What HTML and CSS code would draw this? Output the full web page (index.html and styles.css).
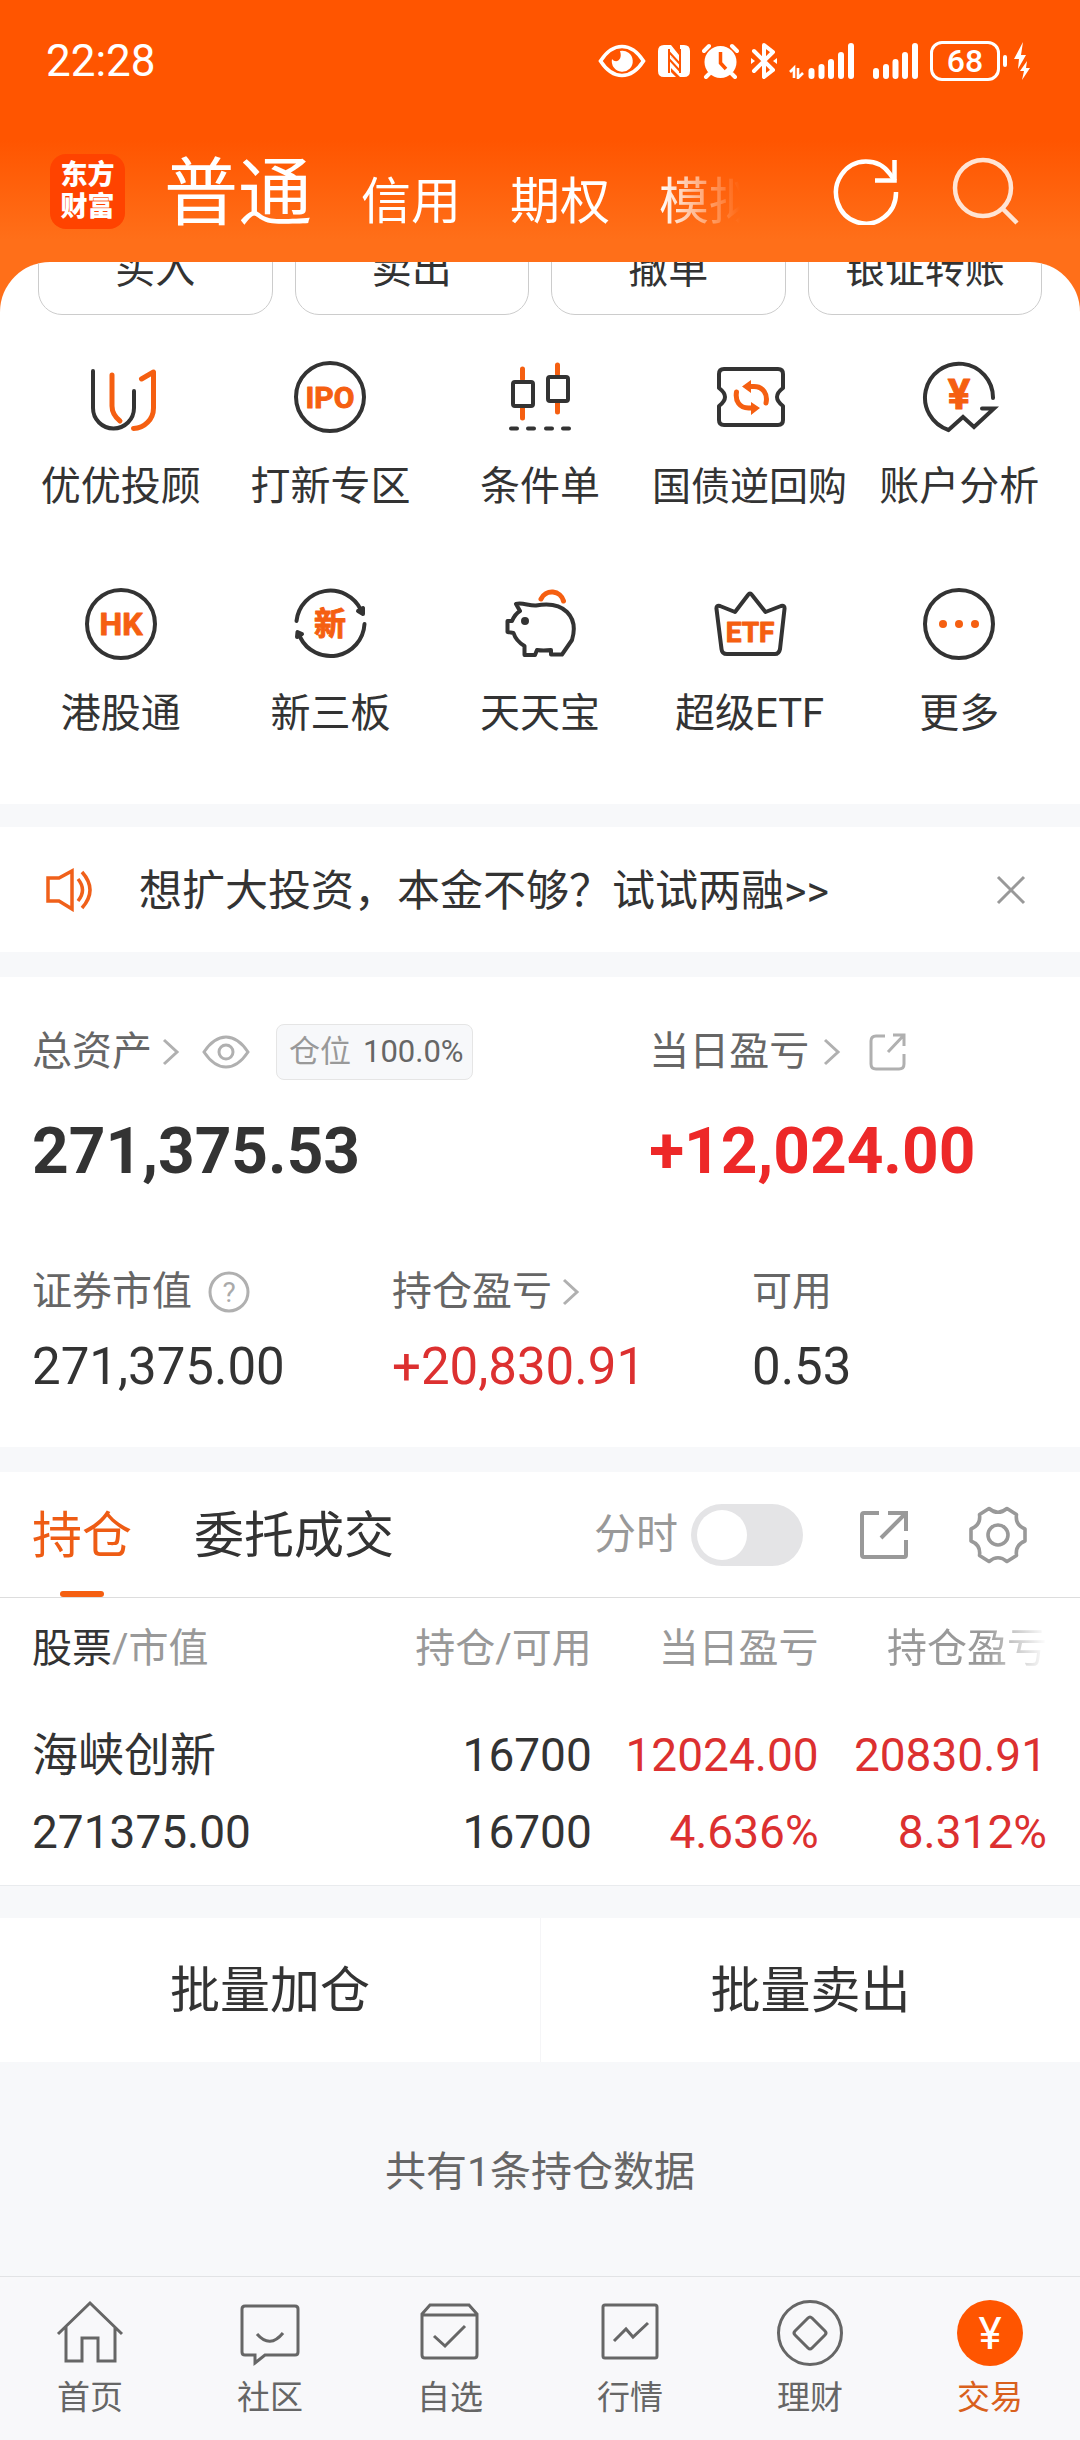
FILE: index.html
```html
<!DOCTYPE html>
<html lang="zh-CN">
<head>
<meta charset="utf-8">
<meta name="viewport" content="width=device-width, initial-scale=1">
<title>交易</title>
<link rel="stylesheet" href="styles.css">
</head>
<body>
<header class="top">
  <div class="status">
    <span class="status-time">22:28</span>
    <div class="status-icons">
      <svg width="48" height="36" viewBox="0 0 48 36" aria-hidden="true"><path d="M2.500 18C9 8 16 3.500 24 3.500S39 8 45.500 18C39 28 32 32.500 24 32.500S9 28 2.500 18Z" fill="none" stroke="#fff" stroke-width="3.600"/><path d="M22 8a10.500 10.500 0 1 1-8 8c4 5 11 1 8-8Z" fill="#fff"/></svg>
      <svg width="32" height="36" viewBox="0 0 32 36" aria-hidden="true"><path d="M6 2H13L25 17V28L13 14V29L18 34H6Q0 34 0 28V8Q0 2 6 2Z" fill="#fff"/><path d="M22 2H26Q32 2 32 8V28Q32 34 26 34H22L9 21V10L22 23Z" fill="#fff"/><path d="M11 6V30M22 6V30M11 9L22 21M11 16L22 28" stroke="#f50" stroke-width="2" fill="none"/></svg>
      <svg width="37" height="36" viewBox="0 0 37 36" aria-hidden="true"><circle cx="18.500" cy="19" r="16" fill="#fff"/><path d="M2 8L7 3M35 8L30 3M7 31L4 34M30 31L33 34" stroke="#fff" stroke-width="4" stroke-linecap="round"/><path d="M18.500 9V20L24 26" fill="none" stroke="#f50" stroke-width="3.500"/></svg>
      <svg width="26" height="38" viewBox="0 0 26 38" aria-hidden="true"><path d="M3 9L22 28L13 35V3L22 10L3 29" fill="none" stroke="#fff" stroke-width="4" stroke-linejoin="round" stroke-linecap="round"/><path d="M0 16l4 3-4 3zM26 16l-4 3 4 3z" fill="#fff"/></svg>
      <svg class="signal-main" width="65" height="36" viewBox="0 0 65 36" aria-hidden="true"><path d="M22.500 28V33M32.500 24V33M42 19V33M52 12V33M62 3V33" stroke="#fff" stroke-width="6" stroke-linecap="round"/><path d="M1 29L5 25V35M9 25V35L14 30" fill="none" stroke="#fff" stroke-width="2.600"/></svg>
      <svg width="45" height="36" viewBox="0 0 45 36" aria-hidden="true"><path d="M3 28V33M13 24V33M22.500 19V33M32 12V33M42 3V33" stroke="#fff" stroke-width="6" stroke-linecap="round"/></svg>
      <span class="battery"><span class="battery-cell">68</span><span class="battery-nub"></span><svg class="bolt" width="17" height="38" viewBox="0 0 17 38" aria-hidden="true"><path d="M10 0L1 17H6L5 27L13 13H8ZM14 19L7 29H11L9 38L17 26H13Z" fill="#fff"/></svg></span>
    </div>
  </div>
  <div class="bar">
    <div class="logo">东方<br>财富</div>
    <nav class="accounts">
      <a class="account account-on" href="#">普通</a>
      <a class="account" href="#">信用</a>
      <a class="account" href="#">期权</a>
      <a class="account" href="#">模拟</a>
    </nav>
    <div class="bar-tools">
      <button class="tool" type="button" aria-label="刷新"><svg width="68" height="68" viewBox="0 0 68 68"><path d="M64 35A30 31 0 1 1 58 17L63 24" fill="none" stroke="#fff" stroke-width="4.500"/><path d="M62.500 3V23.500H43" fill="none" stroke="#fff" stroke-width="4.500"/></svg></button>
      <button class="tool" type="button" aria-label="搜索"><svg width="68" height="68" viewBox="0 0 68 68"><circle cx="31" cy="31" r="28" fill="none" stroke="#ffe4d4" stroke-width="4.500"/><path d="M50 51L65 66" stroke="#ffe4d4" stroke-width="4.500"/></svg></button>
    </div>
  </div>
</header>

<main class="page">
  <section class="panel">
    <div class="orders">
      <button class="order" type="button">买入</button>
      <button class="order" type="button">卖出</button>
      <button class="order" type="button">撤单</button>
      <button class="order" type="button">银证转账</button>
    </div>
    <div class="quick">
      <a class="quick-item" href="#"><svg class="ico" viewBox="0 0 80 80"><path d="M12 14V51a20.500 20.500 0 0 0 41 0V34"/><path class="hot" d="M31 18V49c0 6 3 11 8 15M60.500 22L72.500 15V51a20.500 20.500 0 0 1-20 20.500"/></svg><span>优优投顾</span></a>
      <a class="quick-item" href="#"><svg class="ico" viewBox="0 0 80 80"><circle cx="40" cy="40" r="34"/><text class="mark" x="40" y="51" font-size="30">IPO</text></svg><span>打新专区</span></a>
      <a class="quick-item" href="#"><svg class="ico" viewBox="0 0 80 80"><path class="hot" d="M22.500 12V22M22.500 51V61M57.500 8V17M57.500 46V55"/><rect x="13" y="25" width="20" height="24" rx="2"/><rect x="48" y="20" width="20" height="24" rx="2"/><path d="M11 71.500h6M28 71.500h6M46 71.500h6M63 71.500h6"/></svg><span>条件单</span></a>
      <a class="quick-item quick-long" href="#"><svg class="ico" viewBox="0 0 80 80"><path d="M14 12H68Q73 12 73 17V31C69 34 67 36 67 40S69 46 73 49V63Q73 68 68 68H14Q9 68 9 63V49C13 46 15 44 15 40S13 34 9 31V17Q9 12 14 12Z"/><path class="hot" d="M26.500 35c-1.500 9 3 16 12 16h3M56 46c2-9-3-16.500-12-16.500h-3" stroke-width="5"/><path class="fill" d="M41 45L50 51L41 58ZM41 23L32 29.500L41 36Z"/></svg><span>国债逆回购</span></a>
      <a class="quick-item" href="#"><svg class="ico" viewBox="0 0 80 80"><path d="M74 41A34 34 0 1 0 29.500 73L44 60L55 70L75 51.500H63" stroke-linejoin="miter"/><text class="mark" x="40" y="52" font-size="42">¥</text></svg><span>账户分析</span></a>
      <a class="quick-item" href="#"><svg class="ico" viewBox="0 0 80 80"><circle cx="40" cy="40" r="34"/><text class="mark" x="40" y="51" font-size="32">HK</text></svg><span>港股通</span></a>
      <a class="quick-item" href="#"><svg class="ico" viewBox="0 0 80 80"><path d="M6.500 37A34 34 0 0 1 71 26M74.500 40A34 34 0 0 1 10 53"/><path class="ink" d="M68 27L73 24L73 30ZM12 50L7.500 48L7 53Z"/><text class="mark" x="40" y="51" font-size="32">新</text></svg><span>新三板</span></a>
      <a class="quick-item" href="#"><svg class="ico" viewBox="0 0 80 80"><path class="hot" d="M41 15a12 12 0 0 1 22.500 2"/><path d="M16 20C22 18 29 22 36 21.500C50 19 60 21 67 28C75 36 75 46 72 56L62 70.500H51V66Q43 67 37 66L35 71H24.500V62Q16 57 13.500 49L7.500 48V37H12Q15 30 20 27Z"/><circle class="ink" cx="25" cy="37" r="2"/></svg><span>天天宝</span></a>
      <a class="quick-item" href="#"><svg class="ico" viewBox="0 0 80 80"><path d="M38 11Q40 8 42 11L55.500 28L71 22Q75 21 74.500 25L70 65Q69 70 65 70H17Q12 70 11.500 65L6.500 25Q6 21 10 22L25 28Z"/><text class="mark" x="40" y="58" font-size="28">ETF</text></svg><span>超级ETF</span></a>
      <a class="quick-item" href="#"><svg class="ico" viewBox="0 0 80 80"><circle cx="40" cy="40" r="34"/><g class="fill"><circle cx="24" cy="40" r="4"/><circle cx="40" cy="40" r="4"/><circle cx="56" cy="40" r="4"/></g></svg><span>更多</span></a>
    </div>
  </section>

  <section class="notice">
    <svg width="50" height="44" viewBox="0 0 50 44" fill="none" stroke="#f0601a" stroke-width="3.500" aria-hidden="true"><path d="M3 10H14L27 3V41L14 33H3Z"/><path d="M33 11Q42 22 33 33M37 4Q53 22 37 40"/></svg>
    <a class="notice-text" href="#">想扩大投资，本金不够？试试两融&gt;&gt;</a>
    <button class="tool" type="button" aria-label="关闭"><svg width="30" height="30" viewBox="0 0 30 30"><path d="M2 2L28 28M28 2L2 28" stroke="#999" stroke-width="3"/></svg></button>
  </section>

  <section class="assets">
    <div class="asset-row asset-row-main">
      <div class="asset">
        <div class="asset-label"><span>总资产</span><svg class="chev" width="18" height="30" viewBox="0 0 18 30"><path d="M2 3L15 15L2 27"/></svg><svg class="eye" width="48" height="34" viewBox="0 0 48 34"><path d="M2 17Q12 2 24 2T46 17Q36 32 24 32T2 17Z"/><circle cx="24" cy="17" r="7"/></svg><span class="badge"><span class="badge-name">仓位</span><span>100.0%</span></span></div>
        <strong class="asset-total">271,375.53</strong>
      </div>
      <div class="asset">
        <div class="asset-label"><span>当日盈亏</span><svg class="chev chev-wide" width="18" height="30" viewBox="0 0 18 30"><path d="M2 3L15 15L2 27"/></svg><svg class="share" width="38" height="38" viewBox="0 0 38 38"><path d="M16 3H7Q2 3 2 8V31Q2 36 7 36H30Q35 36 35 31V21M24 2H35V13M35 2L19 19"/></svg></div>
        <strong class="asset-total rise-strong">+12,024.00</strong>
      </div>
    </div>
    <div class="asset-row asset-row-sub">
      <div class="asset">
        <div class="asset-label"><span>证券市值</span><svg class="help" width="42" height="42" viewBox="0 0 42 42"><circle cx="21" cy="21" r="19"/><text x="21" y="31">?</text></svg></div>
        <span class="asset-value">271,375.00</span>
      </div>
      <div class="asset">
        <div class="asset-label"><span>持仓盈亏</span><svg class="chev" width="18" height="30" viewBox="0 0 18 30"><path d="M2 3L15 15L2 27"/></svg></div>
        <span class="asset-value rise">+20,830.91</span>
      </div>
      <div class="asset">
        <div class="asset-label"><span>可用</span></div>
        <span class="asset-value">0.53</span>
      </div>
    </div>
  </section>

  <section class="holdings">
    <div class="tabs">
      <button class="tab tab-on" type="button">持仓</button>
      <button class="tab" type="button">委托成交</button>
      <label class="minute"><span>分时</span><input class="switch" type="checkbox"></label>
      <button class="tool" type="button" aria-label="导出"><svg width="50" height="50" viewBox="0 0 50 50" fill="none" stroke="#999" stroke-width="4"><path d="M20 3H5Q3 3 3 5V45Q3 47 5 47H45Q47 47 47 45V30M29 3H47V21M46 4L22 28"/></svg></button>
      <button class="tool tool-gear" type="button" aria-label="设置"><svg width="58" height="58" viewBox="0 0 58 58" fill="none" stroke="#999" stroke-width="3.600" stroke-linejoin="round"><path d="M56 23Q46 19 47.500 8.500L38 2.500Q29 10 20 2.500L10.500 8.500Q12 19 2 23V35Q12 39 10.500 49.500L20 55.500Q29 48 38 55.500L47.500 49.500Q46 39 56 35Z"/><circle cx="29" cy="29" r="10"/></svg></button>
    </div>
    <table class="table">
      <thead><tr><th><b>股票</b>/市值</th><th>持仓/可用</th><th>当日盈亏</th><th><span class="fade">持仓盈亏</span></th></tr></thead>
      <tbody><tr><td>海峡创新<br>271375.00</td><td>16700<br>16700</td><td class="rise">12024.00<br>4.636%</td><td class="rise">20830.91<br>8.312%</td></tr></tbody>
    </table>
  </section>

  <div class="batch">
    <button class="batch-btn" type="button">批量加仓</button>
    <button class="batch-btn" type="button">批量卖出</button>
  </div>
  <p class="count">共有1条持仓数据</p>
</main>

<nav class="nav">
  <a class="nav-item" href="#"><svg class="nav-ico" viewBox="0 0 72 72"><path d="M4 37L36 6L68 37M12 30V64H28V41H44V64H61V30"/></svg><span>首页</span></a>
  <a class="nav-item" href="#"><svg class="nav-ico" viewBox="0 0 72 72"><path d="M11 9H61Q64 9 64 12V55Q64 58 61 58H31L21 66V58H11Q8 58 8 55V12Q8 9 11 9ZM23 37Q36 52 49 36"/></svg><span>社区</span></a>
  <a class="nav-item" href="#"><svg class="nav-ico" viewBox="0 0 72 72"><path d="M8 17L16 8H55L63 17V58Q63 61 60 61H11Q8 61 8 58ZM8 18H63M20 39L31 49L51 29"/></svg><span>自选</span></a>
  <a class="nav-item" href="#"><svg class="nav-ico" viewBox="0 0 72 72"><rect x="9" y="8" width="54" height="53" rx="2"/><path d="M20 44L32 32L39 40L54 26"/></svg><span>行情</span></a>
  <a class="nav-item" href="#"><svg class="nav-ico" viewBox="0 0 72 72"><circle cx="36" cy="36" r="31.500"/><path d="M34 21Q36 19 38 21L51 34Q53 36 51 38L38 51Q36 53 34 51L21 38Q19 36 21 34Z"/></svg><span>理财</span></a>
  <a class="nav-item nav-on" href="#"><svg class="nav-ico" viewBox="0 0 72 72"><circle cx="36" cy="36" r="33"/><text x="36" y="52">¥</text></svg><span>交易</span></a>
</nav>
</body>
</html>
```
FILE: styles.css
```css
* { box-sizing: border-box; }

body {
  margin: 0;
  min-height: 100vh;
  display: flex;
  flex-direction: column;
  background: #f7f8fa;
  color: #333;
  font-family: "Roboto", "Noto Sans CJK SC", sans-serif;
  font-size: 40px;
  line-height: 60px;
}

a { color: inherit; text-decoration: none; }
svg { display: block; flex: none; }
button {
  padding: 0;
  border: 0;
  background: none;
  color: inherit;
  font: inherit;
  cursor: pointer;
}

/* header */
.top {
  background: linear-gradient(#f50 0, #f50 140px, #ff6f19 240px, #ff6f19 100%);
  color: #fff;
  padding-bottom: 84px;
}
.status {
  display: flex;
  justify-content: space-between;
  align-items: center;
  height: 122px;
  padding: 0 50px 0 46px;
}
.status-time { font-size: 44px; }
.status-icons { display: flex; align-items: center; gap: 12px; }
.signal-main { margin-right: 7px; }
.battery { display: flex; align-items: center; gap: 3px; }
.battery-cell {
  width: 70px;
  height: 40px;
  border: 3px solid #fff;
  border-radius: 12px;
  font-size: 32px;
  font-weight: 500;
  line-height: 34px;
  text-align: center;
}
.battery-nub { width: 4px; height: 12px; border-radius: 2px; background: #fff; }
.bolt { margin-left: 3px; }
.bar {
  display: flex;
  align-items: center;
  height: 106px;
  margin-top: 16px;
  padding: 0 60px 0 50px;
}
.logo {
  width: 75px;
  height: 75px;
  padding-top: 5px;
  border-radius: 16px;
  background: #ff4300;
  font-size: 27px;
  font-weight: 900;
  line-height: 32px;
  text-align: center;
}
.accounts {
  flex: 1;
  display: flex;
  align-items: baseline;
  gap: 49px;
  margin: 0 92px 0 39px;
  padding-top: 14px;
  overflow: hidden;
  white-space: nowrap;
  font-size: 50px;
  line-height: 106px;
  -webkit-mask-image: linear-gradient(to right, #000 86%, transparent);
  mask-image: linear-gradient(to right, #000 86%, transparent);
}
.account-on { font-size: 74px; }
.bar-tools { display: flex; gap: 52px; }

/* shortcuts */
.page { flex: 1; display: flex; flex-direction: column; }
.panel {
  margin-top: -66px;
  padding-bottom: 60px;
  border-radius: 50px 50px 0 0;
  background: #fff;
  overflow: hidden;
}
.orders {
  display: grid;
  grid-template-columns: repeat(4, 1fr);
  gap: 22px;
  margin-top: -39px;
  padding: 0 38px;
}
.order {
  height: 92px;
  padding-top: 2px;
  border: 1px solid #ccc;
  border-radius: 24px;
}
.quick {
  display: grid;
  grid-template-columns: repeat(5, 1fr);
  row-gap: 67px;
  padding: 42px 16px 0;
}
.quick-item {
  display: flex;
  flex-direction: column;
  align-items: center;
  gap: 20px;
  min-width: 0;
  white-space: nowrap;
}
.quick-long { font-size: 39px; }
.ico {
  width: 80px;
  height: 80px;
  fill: none;
  stroke: #333;
  stroke-width: 4;
  stroke-linecap: round;
  stroke-linejoin: round;
}
.ico .hot { stroke: #f55f11; stroke-width: 5; }
.ico .fill { fill: #f55f11; stroke: none; }
.ico .ink { fill: #333; }
.ico .mark {
  fill: #f55f11;
  stroke: #f55f11;
  stroke-width: 1;
  font-weight: 700;
  text-anchor: middle;
}

/* notice */
.notice {
  display: flex;
  align-items: center;
  height: 125px;
  margin-top: 23px;
  padding: 0 54px 0 45px;
  background: #fff;
}
.notice-text { flex: 1; margin-left: 44px; padding-top: 2px; font-size: 43px; }

/* assets */
.assets { margin-top: 25px; padding: 47px 0 50px; background: #fff; }
.asset-row { display: grid; }
.asset-row-main { grid-template-columns: 4fr 3fr; }
.asset-row-sub { grid-template-columns: repeat(3, 1fr); margin-top: 74px; }
.asset { padding-left: 32px; }
.asset-label {
  display: flex;
  align-items: center;
  height: 56px;
  color: #666;
  white-space: nowrap;
}
.asset-row-sub .asset-label { height: 60px; }
.asset-label svg { fill: none; stroke: #b0b0b0; stroke-width: 3; }
.chev { margin-left: 10px; }
.chev-wide { margin: 0 12px 0 14px; }
.eye { margin: 0 26px 0 22px; }
.share { margin-left: 16px; }
.help { margin-left: 16px; }
.help text { font-size: 28px; fill: #aaa; stroke: none; text-anchor: middle; }
.badge {
  display: flex;
  gap: 12px;
  height: 56px;
  padding: 0 8px 0 12px;
  border: 1px solid #e5e5e5;
  border-radius: 8px;
  background: #f7f8fa;
  font-size: 31px;
  line-height: 54px;
}
.badge-name { color: #999; }
.asset-total { display: block; margin-top: 36px; font-size: 64px; line-height: 72px; }
.asset-value { display: block; margin-top: 15px; font-size: 51px; }
.rise { color: #dc3030; }
.rise-strong { color: #ed2828; }

/* holdings */
.holdings { margin-top: 25px; background: #fff; border-bottom: 1px solid #e9ebee; }
.tabs {
  display: flex;
  align-items: center;
  height: 126px;
  padding: 0 53px 0 32px;
  border-bottom: 1px solid #ddd;
}
.tab {
  position: relative;
  height: 125px;
  margin-right: 62px;
  padding-top: 2px;
  font-size: 50px;
  white-space: nowrap;
}
.tab-on { color: #ee5c14; }
.tab-on::after {
  content: "";
  position: absolute;
  left: 28px;
  bottom: 0;
  width: 44px;
  height: 6px;
  border-radius: 3px;
  background: #f55f11;
}
.minute {
  display: flex;
  align-items: center;
  gap: 13px;
  margin: 0 56px 0 auto;
  color: #999;
  font-size: 42px;
}
.switch {
  appearance: none;
  width: 112px;
  height: 62px;
  margin: 0;
  padding: 6px;
  border-radius: 31px;
  background: #e4e4e6;
}
.switch::before {
  content: "";
  display: block;
  width: 50px;
  height: 50px;
  border-radius: 50%;
  background: #fff;
}
.switch:checked { background: #f55f11; }
.switch:checked::before { margin-left: auto; }
.tool-gear { margin-left: 60px; }

.table { width: 100%; table-layout: fixed; border-collapse: collapse; text-align: right; }
.table th { height: 100px; padding: 2px 0 0; color: #999; font-weight: 400; white-space: nowrap; }
.table th b { color: #333; font-weight: 400; }
.table td { padding: 19px 0 14px; font-size: 46px; line-height: 77px; white-space: nowrap; }
.table th:nth-child(1) { width: 36%; }
.table th:nth-child(2) { width: 18.8%; }
.table th:nth-child(3) { width: 21%; }
.table tr > :first-child { padding-left: 32px; text-align: left; }
.table tr > :last-child { padding-right: 33px; }
.fade {
  -webkit-mask-image: linear-gradient(to right, #000 62%, transparent);
  mask-image: linear-gradient(to right, #000 62%, transparent);
}

.batch { display: grid; grid-template-columns: 1fr 1fr; margin-top: 32px; background: #fff; }
.batch-btn { height: 144px; padding-top: 2px; font-size: 50px; }
.batch-btn + .batch-btn { border-left: 1px solid #f5f5f7; }
.count {
  flex: 1;
  display: flex;
  align-items: center;
  justify-content: center;
  min-height: 120px;
  margin: 0;
  padding-top: 5px;
  color: #666;
  font-size: 41px;
}

/* bottom navigation */
.nav {
  display: grid;
  grid-template-columns: repeat(6, 1fr);
  padding: 20px 0;
  border-top: 1px solid #e2e3e5;
  background: #f8f8fa;
  color: #666;
  font-size: 33px;
  line-height: 44px;
}
.nav-item { display: flex; flex-direction: column; align-items: center; gap: 7px; }
.nav-ico { width: 72px; height: 72px; fill: none; stroke: #666; stroke-width: 3; }
.nav-on { color: #d9601c; }
.nav-on circle { fill: #f50; stroke: none; }
.nav-on text { fill: #fff; stroke: none; font-size: 44px; text-anchor: middle; }
```
